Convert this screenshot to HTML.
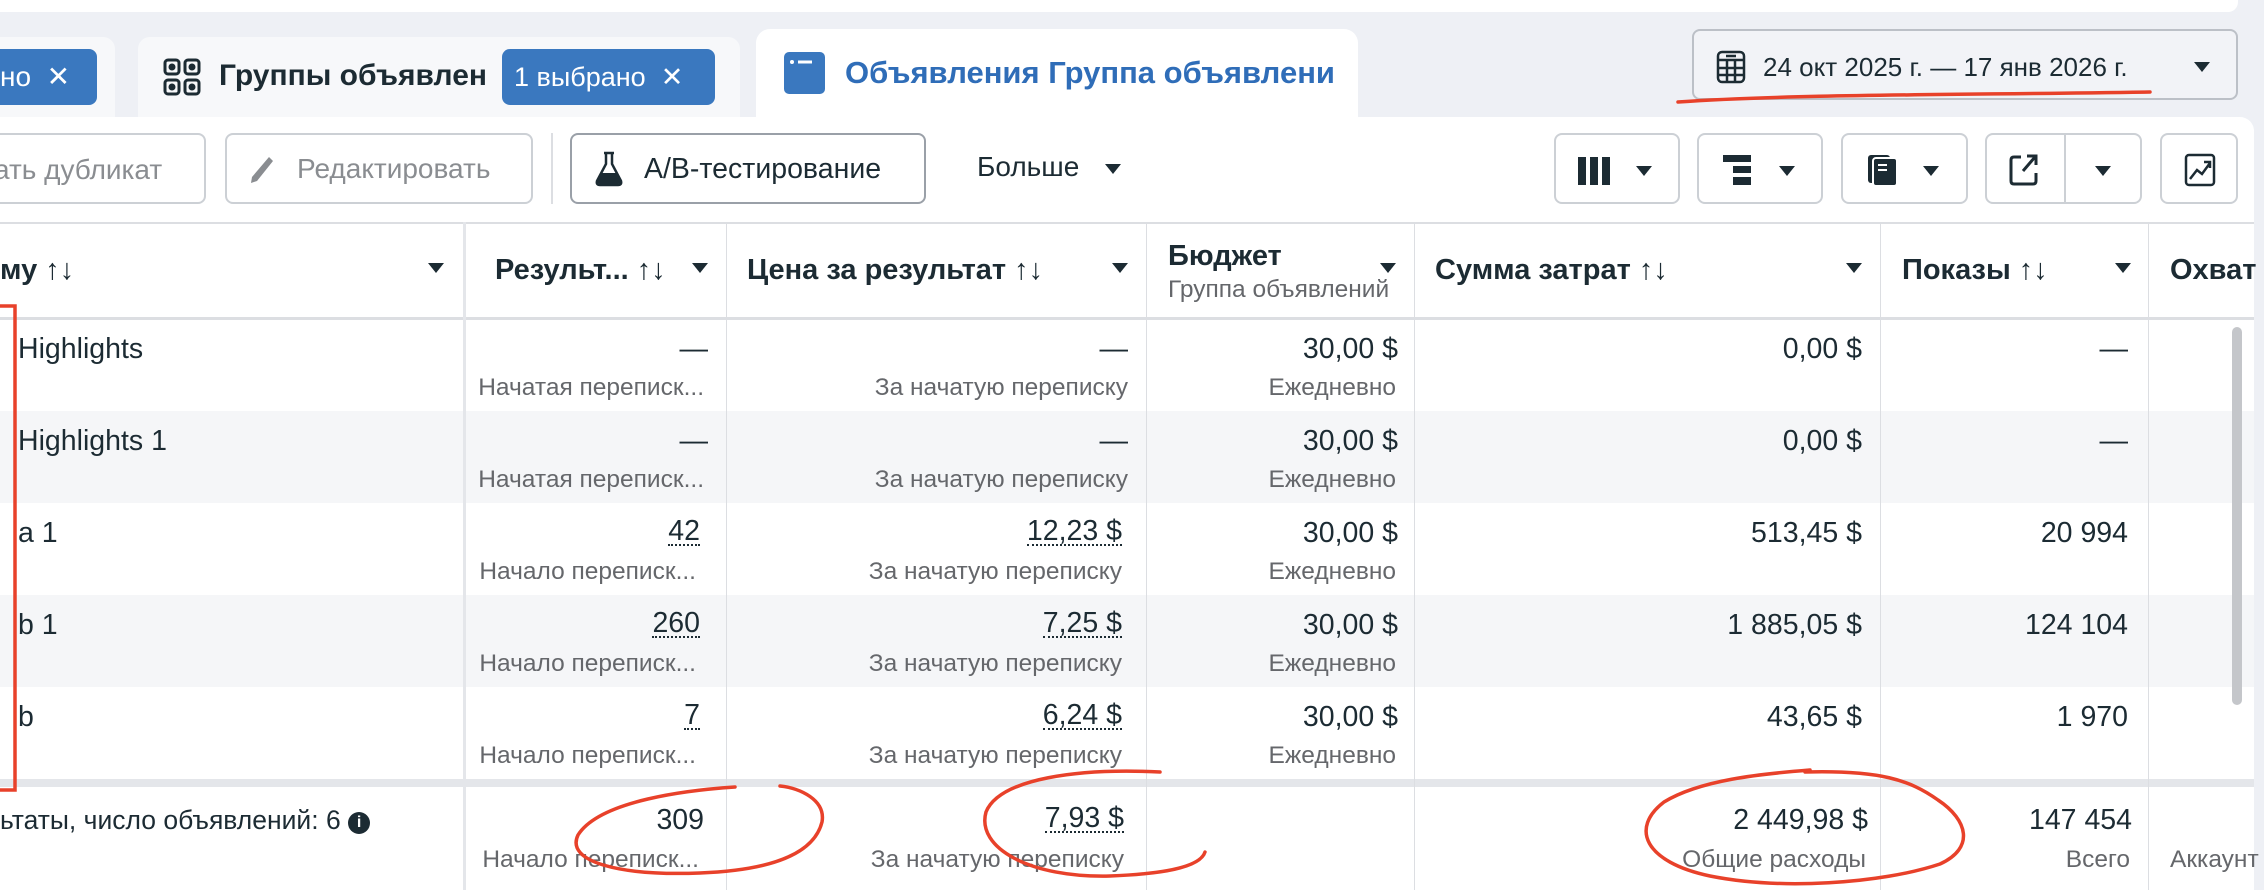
<!DOCTYPE html>
<html><head><meta charset="utf-8"><style>
*{margin:0;padding:0;box-sizing:border-box}
body{width:2264px;height:890px;overflow:hidden;background:#eef0f5;font-family:"Liberation Sans",sans-serif;color:#1c2b33;position:relative}
.a{position:absolute;white-space:nowrap}
.h{font-weight:bold;font-size:29px;line-height:30px}
.v{font-size:28.5px;line-height:30px;text-align:right}
.s{font-size:24.5px;line-height:28px;color:#65676b;text-align:right}
.d{border-bottom:2px dotted #1c2b33;line-height:26px}
.btn{position:absolute;border:2px solid #ccd0d5;border-radius:8px;background:#fff;top:133px;height:71px}
.car{display:inline-block;width:0;height:0;border-left:8px solid transparent;border-right:8px solid transparent;border-top:10px solid #1c2b33}
.vl{position:absolute;top:222px;height:668px;width:1px;background:#dcdee2}
.row{position:absolute;left:0;width:2254px}
</style></head><body>
<div class="a" style="left:0;top:0;width:2238px;height:12px;background:#fff;border-radius:0 0 10px 0"></div>

<div class="a" style="left:0;top:37px;width:115px;height:80px;background:#f7f8fa;border-radius:0 12px 0 0"></div>
<div class="a" style="left:0;top:49px;width:97px;height:56px;background:#3a78bf;border-radius:0 8px 8px 0;color:#fff;font-size:28px;line-height:56px;padding-left:0">но&nbsp;&nbsp;✕</div>
<div class="a" style="left:138px;top:37px;width:602px;height:80px;background:#f7f8fa;border-radius:12px 12px 0 0"></div>
<svg class="a" style="left:163px;top:58px" width="38" height="38" viewBox="0 0 38 38" fill="none" stroke="#1c2b33" stroke-width="3"><rect x="2" y="2" width="14" height="14" rx="3"/><rect x="22" y="2" width="14" height="14" rx="3"/><rect x="2" y="22" width="14" height="14" rx="3"/><rect x="22" y="22" width="14" height="14" rx="3"/><circle cx="9" cy="9" r="2" fill="#1c2b33"/><circle cx="29" cy="9" r="2" fill="#1c2b33"/><circle cx="9" cy="29" r="2" fill="#1c2b33"/><circle cx="29" cy="29" r="2" fill="#1c2b33"/></svg>
<div class="a" style="left:219px;top:57px;width:266px;overflow:hidden;font-weight:bold;font-size:30px;line-height:38px">Группы объявлений</div>
<div class="a" style="left:502px;top:49px;width:213px;height:56px;background:#3a78bf;border-radius:8px;color:#fff;font-size:27px;line-height:56px;padding-left:12px">1 выбрано&nbsp;&nbsp;✕</div>
<div class="a" style="left:756px;top:29px;width:602px;height:92px;background:#fff;border-radius:14px 14px 0 0"></div>
<svg class="a" style="left:784px;top:52px" width="41" height="42" viewBox="0 0 41 42"><rect x="0" y="0" width="41" height="42" rx="5" fill="#3a78bf"/><circle cx="8" cy="10" r="2" fill="#fff"/><rect x="14" y="8.5" width="14" height="3" fill="#fff"/></svg>
<div class="a" style="left:845px;top:54px;width:490px;overflow:hidden;font-weight:bold;font-size:31px;line-height:38px;color:#2f6db8">Объявления Группа объявлений</div>

<div class="a" style="left:1692px;top:29px;width:546px;height:71px;border:2px solid #bcc0c7;border-radius:8px;background:#f2f3f7"></div>
<svg class="a" style="left:1716px;top:50px" width="30" height="34" viewBox="0 0 30 34" fill="none" stroke="#1c2b33" stroke-width="2.5"><rect x="2" y="2" width="26" height="30" rx="4"/><line x1="2" y1="10" x2="28" y2="10"/><line x1="2" y1="18" x2="28" y2="18"/><line x1="2" y1="25" x2="28" y2="25"/><line x1="11" y1="10" x2="11" y2="32"/><line x1="19" y1="10" x2="19" y2="32"/><line x1="10" y1="6" x2="20" y2="6"/></svg>
<div class="a" style="left:1763px;top:51px;font-size:26px;line-height:32px">24 окт 2025 г. — 17 янв 2026 г.</div>
<div class="a car" style="left:2194px;top:62px"></div>
<svg class="a" style="left:1670px;top:88px" width="490" height="20"><path d="M8 14 C120 6 300 7 480 4" stroke="#e8412a" stroke-width="3.5" fill="none" stroke-linecap="round"/></svg>

<div class="a" style="left:0;top:117px;width:2254px;height:773px;background:#fff;border-radius:0 14px 0 0"></div>

<div class="btn" style="left:-10px;width:216px"><div class="a" style="left:2px;top:19px;font-size:28px;color:#8a8d91">ать дубликат</div></div>
<div class="btn" style="left:225px;width:308px"><svg class="a" style="left:22px;top:20px" width="26" height="30" viewBox="0 0 26 30"><path d="M20 2 L24 6 L8 26 L2 28 L3 22 Z" fill="#8a8d91"/></svg><div class="a" style="left:70px;top:18px;font-size:28px;color:#8a8d91">Редактировать</div></div>
<div class="a" style="left:551px;top:133px;width:2px;height:71px;background:#dcdee2"></div>
<div class="btn" style="left:570px;width:356px;border-color:#9aa0a8"><svg class="a" style="left:22px;top:16px" width="30" height="36" viewBox="0 0 30 36"><path d="M10 2 H20 M12 2 V13 L3 30 Q2 34 6 34 H24 Q28 34 27 30 L18 13 V2" fill="none" stroke="#1c2b33" stroke-width="2.5"/><path d="M7 22 H23 L27 31 Q27 33 24 33 H6 Q3 33 4 30 Z" fill="#1c2b33"/></svg><div class="a" style="left:72px;top:18px;font-size:28.5px">A/B-тестирование</div></div>
<div class="a" style="left:977px;top:151px;font-size:28px">Больше</div>
<div class="a car" style="left:1105px;top:164px"></div>

<div class="btn" style="left:1554px;width:126px"><svg class="a" style="left:22px;top:22px" width="34" height="28"><rect x="0" y="0" width="8" height="28" fill="#1c2b33"/><rect x="12" y="0" width="8" height="28" fill="#1c2b33"/><rect x="24" y="0" width="8" height="28" fill="#1c2b33"/></svg><div class="a car" style="left:80px;top:31px"></div></div>
<div class="btn" style="left:1697px;width:126px"><svg class="a" style="left:24px;top:20px" width="30" height="30"><rect x="0" y="0" width="28" height="7" fill="#1c2b33"/><rect x="10" y="11" width="18" height="7" fill="#1c2b33"/><rect x="10" y="22" width="18" height="8" fill="#1c2b33"/></svg><div class="a car" style="left:80px;top:31px"></div></div>
<div class="btn" style="left:1841px;width:127px"><svg class="a" style="left:22px;top:18px" width="34" height="34" viewBox="0 0 34 34"><rect x="3" y="2" width="22" height="28" rx="3" fill="#1c2b33"/><rect x="8" y="5" width="24" height="28" rx="3" fill="#1c2b33" stroke="#fff" stroke-width="2"/><line x1="13" y1="12" x2="22" y2="12" stroke="#fff" stroke-width="2"/><line x1="13" y1="17" x2="22" y2="17" stroke="#fff" stroke-width="2"/></svg><div class="a car" style="left:80px;top:31px"></div></div>
<div class="btn" style="left:1985px;width:157px"><svg class="a" style="left:22px;top:18px" width="30" height="34" viewBox="0 0 30 34" fill="none" stroke="#1c2b33" stroke-width="3"><path d="M12 4 H5 Q2 4 2 7 V28 Q2 31 5 31 H24 Q27 31 27 28 V20"/><path d="M14 18 L26 4 M18 3 H27 V12"/></svg><div class="a" style="left:77px;top:0;width:2px;height:67px;background:#ccd0d5"></div><div class="a car" style="left:108px;top:31px"></div></div>
<div class="btn" style="left:2160px;width:78px"><svg class="a" style="left:22px;top:18px" width="32" height="34" viewBox="0 0 32 34" fill="none" stroke="#1c2b33" stroke-width="2.5"><rect x="2" y="2" width="28" height="30" rx="3"/><path d="M6 26 L13 17 L18 21 L26 10 M20 9 H26 V15"/></svg></div>

<div class="row" style="top:222px;height:2px;background:#dcdee2"></div>
<div class="row" style="top:317px;height:3px;background:#dcdee2"></div>
<div class="row" style="top:411px;height:92px;background:#f5f6f8"></div>
<div class="row" style="top:595px;height:92px;background:#f5f6f8"></div>
<div class="row" style="top:779px;height:8px;background:#e4e6ea"></div>

<div class="vl" style="left:463px;width:3px;background:#e4e6ea"></div>
<div class="vl" style="left:726px"></div>
<div class="vl" style="left:1146px"></div>
<div class="vl" style="left:1414px"></div>
<div class="vl" style="left:1880px"></div>
<div class="vl" style="left:2148px"></div>

<div class="a h" style="left:0;top:255px">му ↑↓</div><div class="a car" style="left:428px;top:263px"></div>
<div class="a h" style="left:495px;top:255px">Результ... ↑↓</div><div class="a car" style="left:692px;top:263px"></div>
<div class="a h" style="left:747px;top:255px">Цена за результат ↑↓</div><div class="a car" style="left:1112px;top:263px"></div>
<div class="a h" style="left:1168px;top:241px">Бюджет</div><div class="a s" style="left:1168px;top:276px;text-align:left">Группа объявлений</div><div class="a car" style="left:1380px;top:263px"></div>
<div class="a h" style="left:1435px;top:255px">Сумма затрат ↑↓</div><div class="a car" style="left:1846px;top:263px"></div>
<div class="a h" style="left:1902px;top:255px">Показы ↑↓</div><div class="a car" style="left:2115px;top:263px"></div>
<div class="a h" style="left:2170px;top:255px">Охват</div>

<div class="a v" style="left:18px;top:334px;text-align:left">Highlights</div>
<div class="a v" style="right:1556px;top:334px">—</div><div class="a s" style="right:1560px;top:374px">Начатая переписк...</div>
<div class="a v" style="right:1136px;top:334px">—</div><div class="a s" style="right:1136px;top:374px">За начатую переписку</div>
<div class="a v" style="right:866px;top:334px">30,00 $</div><div class="a s" style="right:868px;top:374px">Ежедневно</div>
<div class="a v" style="right:402px;top:334px">0,00 $</div>
<div class="a v" style="right:136px;top:334px">—</div>

<div class="a v" style="left:18px;top:426px;text-align:left">Highlights 1</div>
<div class="a v" style="right:1556px;top:426px">—</div><div class="a s" style="right:1560px;top:466px">Начатая переписк...</div>
<div class="a v" style="right:1136px;top:426px">—</div><div class="a s" style="right:1136px;top:466px">За начатую переписку</div>
<div class="a v" style="right:866px;top:426px">30,00 $</div><div class="a s" style="right:868px;top:466px">Ежедневно</div>
<div class="a v" style="right:402px;top:426px">0,00 $</div>
<div class="a v" style="right:136px;top:426px">—</div>

<div class="a v" style="left:18px;top:518px;text-align:left">a 1</div>
<div class="a v d" style="right:1564px;top:518px">42</div><div class="a s" style="right:1568px;top:558px">Начало переписк...</div>
<div class="a v d" style="right:1142px;top:518px">12,23 $</div><div class="a s" style="right:1142px;top:558px">За начатую переписку</div>
<div class="a v" style="right:866px;top:518px">30,00 $</div><div class="a s" style="right:868px;top:558px">Ежедневно</div>
<div class="a v" style="right:402px;top:518px">513,45 $</div>
<div class="a v" style="right:136px;top:518px">20 994</div>

<div class="a v" style="left:18px;top:610px;text-align:left">b 1</div>
<div class="a v d" style="right:1564px;top:610px">260</div><div class="a s" style="right:1568px;top:650px">Начало переписк...</div>
<div class="a v d" style="right:1142px;top:610px">7,25 $</div><div class="a s" style="right:1142px;top:650px">За начатую переписку</div>
<div class="a v" style="right:866px;top:610px">30,00 $</div><div class="a s" style="right:868px;top:650px">Ежедневно</div>
<div class="a v" style="right:402px;top:610px">1 885,05 $</div>
<div class="a v" style="right:136px;top:610px">124 104</div>

<div class="a v" style="left:18px;top:702px;text-align:left">b</div>
<div class="a v d" style="right:1564px;top:702px">7</div><div class="a s" style="right:1568px;top:742px">Начало переписк...</div>
<div class="a v d" style="right:1142px;top:702px">6,24 $</div><div class="a s" style="right:1142px;top:742px">За начатую переписку</div>
<div class="a v" style="right:866px;top:702px">30,00 $</div><div class="a s" style="right:868px;top:742px">Ежедневно</div>
<div class="a v" style="right:402px;top:702px">43,65 $</div>
<div class="a v" style="right:136px;top:702px">1 970</div>

<div class="a v" style="left:0;top:805px;text-align:left;font-size:26.5px">ьтаты, число объявлений: 6 <span style="display:inline-block;width:22px;height:22px;border-radius:50%;background:#1c2b33;color:#fff;font-size:16px;line-height:22px;text-align:center;font-weight:bold;vertical-align:2px">i</span></div>
<div class="a v" style="right:1560px;top:805px">309</div><div class="a s" style="right:1565px;top:846px">Начало переписк...</div>
<div class="a v d" style="right:1140px;top:805px">7,93 $</div><div class="a s" style="right:1140px;top:846px">За начатую переписку</div>
<div class="a v" style="right:396px;top:805px">2 449,98 $</div><div class="a s" style="right:398px;top:846px">Общие расходы</div>
<div class="a v" style="right:132px;top:805px">147 454</div><div class="a s" style="right:134px;top:846px">Всего</div>
<div class="a s" style="left:2170px;top:846px;text-align:left">Аккаунт</div>

<div class="a" style="left:2232px;top:327px;width:10px;height:378px;border-radius:5px;background:#c4c6ca"></div>

<svg class="a" style="left:0;top:0" width="2264" height="890" fill="none" stroke="#e8412a" stroke-width="3.5" stroke-linecap="round">
<path d="M0 306 H15 V790 H0"/>
<path d="M735 787 C690 790 600 800 578 835 C565 862 620 876 700 873 C780 870 815 850 822 822 C826 800 800 788 780 786"/>
<path d="M1160 772 C1080 768 1000 778 986 812 C976 848 1030 878 1110 876 C1160 874 1200 868 1205 852"/>
<path d="M1810 770 C1760 774 1700 780 1664 802 C1630 828 1644 862 1710 876 C1780 890 1880 884 1940 864 C1975 848 1968 820 1938 800 C1910 780 1880 770 1805 772"/>
</svg>
</body></html>
